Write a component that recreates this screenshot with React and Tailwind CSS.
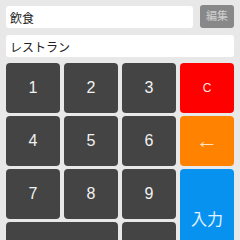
import { useState } from "react";

const FONT = { fontFamily: '"Liberation Sans", "Noto Sans CJK JP", sans-serif' };

// dark number key
function Key({ label, className = "", onPress, children }) {
  return (
    <button
      aria-label={label}
      onClick={() => onPress(label)}
      className={`h-[49.5px] rounded-[4px] bg-[#444444] text-[#f2f2f2] text-[16px] flex items-center justify-center ${className}`}
    >
      {children ?? label}
    </button>
  );
}

export default function App() {
  const [category] = useState("飲食");
  const [memo, setMemo] = useState("レストラン");
  const [value, setValue] = useState("");

  const press = (k) => setValue((v) => v + k);

  return (
    <div className="min-h-screen bg-[#e8e8e8] px-[6px] pt-[6px]" style={FONT}>
      {/* --- category row --- */}
      <div className="flex items-start gap-[7px]">
        <input
          readOnly
          value={category}
          className="flex-1 min-w-0 h-[22px] rounded-[3px] bg-white px-[4px] text-[12px] text-[#222] outline-none"
        />
        <button className="w-[34px] h-[23px] -mt-[1px] rounded-[3px] bg-[#888888] text-[#d0d0d0] text-[11px]">
          編集
        </button>
      </div>

      {/* --- memo --- */}
      <input
        value={memo}
        onChange={(e) => setMemo(e.target.value)}
        className="mt-[7px] w-full h-[22px] rounded-[3px] bg-white px-[4px] text-[12px] text-[#222] outline-none block"
      />

      {/* --- keypad --- */}
      <div className="mt-[6px] grid grid-cols-4 gap-x-[4px] gap-y-[3.5px]">
        <Key label="1" onPress={press} />
        <Key label="2" onPress={press} />
        <Key label="3" onPress={press} />
        <button
          onClick={() => setValue("")}
          className="h-[49.5px] rounded-[4px] bg-[#ff0000] text-[#ffe0e0] text-[12px] flex items-center justify-center"
        >
          C
        </button>

        <Key label="4" onPress={press} />
        <Key label="5" onPress={press} />
        <Key label="6" onPress={press} />
        <button
          onClick={() => setValue((v) => v.slice(0, -1))}
          className="h-[49.5px] rounded-[4px] bg-[#ff8200] text-[#ffe2c0] text-[22px] flex items-center justify-center"
        >
          ←
        </button>

        <Key label="7" onPress={press} />
        <Key label="8" onPress={press} />
        <Key label="9" onPress={press} />
        <button className="row-span-2 rounded-[4px] bg-[#0892f0] text-[#e4f2ff] text-[16px] flex items-center justify-center">
          入力
        </button>

        <Key label="0" onPress={press} className="col-span-2">{""}</Key>
        <Key label="00" onPress={press}>{""}</Key>
      </div>
    </div>
  );
}
